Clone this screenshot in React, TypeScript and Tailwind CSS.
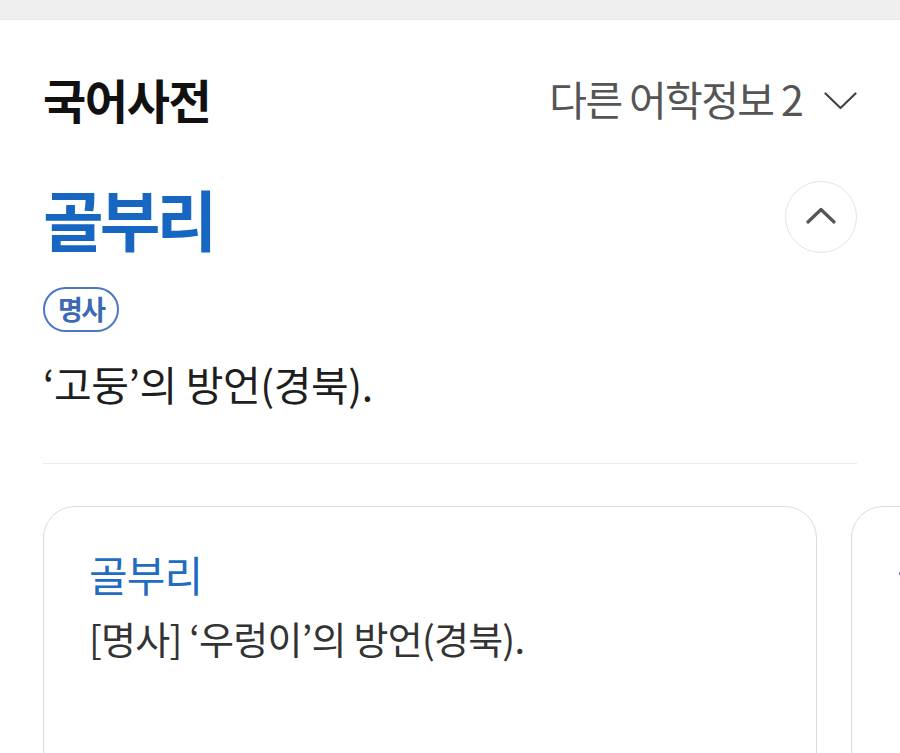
const font = { fontFamily: '"Noto Sans CJK KR", "Noto Sans", sans-serif' };

const cards = [
  { word: "골부리", def: "[명사] ‘우렁이’의 방언(경북)." },
  { word: "골부리", def: "[명사] ‘고둥’의 방언(경북).", extra: "·" },
];

export default function App() {
  return (
    <div className="w-[900px] h-[753px] overflow-hidden bg-white" style={font}>
      <div className="h-[20px] bg-[#efefef] border-b border-[#e8e8e8]" />

      <div className="px-[43px]">
        {/* header */}
        <div className="flex items-center justify-between h-[160px] pb-[2px]">
          <h1 className="text-[47px] font-bold tracking-[-0.03em] text-[#111]">
            국어사전
          </h1>
          <button className="flex items-center gap-[22px] text-[41px] text-[#555] tracking-[-0.04em]">
            다른 어학정보 2
            <svg width="33" height="18" viewBox="0 0 33 18" fill="none" className="mt-[4px]">
              <path d="M1.5 1.5 L16.5 16 L31.5 1.5" stroke="#444" strokeWidth="2.2" strokeLinecap="round" strokeLinejoin="round" />
            </svg>
          </button>
        </div>

        {/* entry */}
        <div className="flex items-center justify-between h-[78px] -mt-[2px]">
          <h2 className="text-[66px] font-bold tracking-[-0.06em] text-[#1766c2] leading-none">
            골부리
          </h2>
          <button className="w-[72px] h-[72px] rounded-full border border-[#e4e4e4] flex items-center justify-center">
            <svg width="30" height="17" viewBox="0 0 30 17" fill="none" className="-mt-[4px]">
              <path d="M2 15 L15 2.5 L28 15" stroke="#555" strokeWidth="3.2" strokeLinecap="round" strokeLinejoin="round" />
            </svg>
          </button>
        </div>

        <div className="mt-[31px]">
          <span className="inline-flex items-center h-[45px] px-[13px] rounded-full border-2 border-[#4a78c2] text-[27px] font-bold text-[#3c69b4] tracking-[-0.06em]">
            명사
          </span>
        </div>

        <p className="mt-[26px] text-[41px] text-[#1e1e1e] tracking-[-0.01em] leading-[50px]">
          ‘고둥’의 방언(경북).
        </p>

        <div className="mt-[55px] h-px bg-[#ebebeb]" />

        {/* related cards */}
        <div className="mt-[42px] flex gap-[34px]">
          {cards.map((c, i) => (
            <div
              key={i}
              className="shrink-0 w-[774px] h-[300px] rounded-[32px] border border-[#dcdcdc] px-[45px] pt-[38px]"
            >
              <div className="text-[42px] text-[#1f6cc0] tracking-[-0.02em] leading-[58px]">
                {c.word}
              </div>
              <div className="mt-[8px] text-[38px] text-[#333] tracking-[-0.02em] leading-[54px]">
                {c.def}
              </div>
              {c.extra && (
                <div className="mt-[10px] text-[40px] text-[#333]">{c.extra}</div>
              )}
            </div>
          ))}
        </div>
      </div>
    </div>
  );
}
